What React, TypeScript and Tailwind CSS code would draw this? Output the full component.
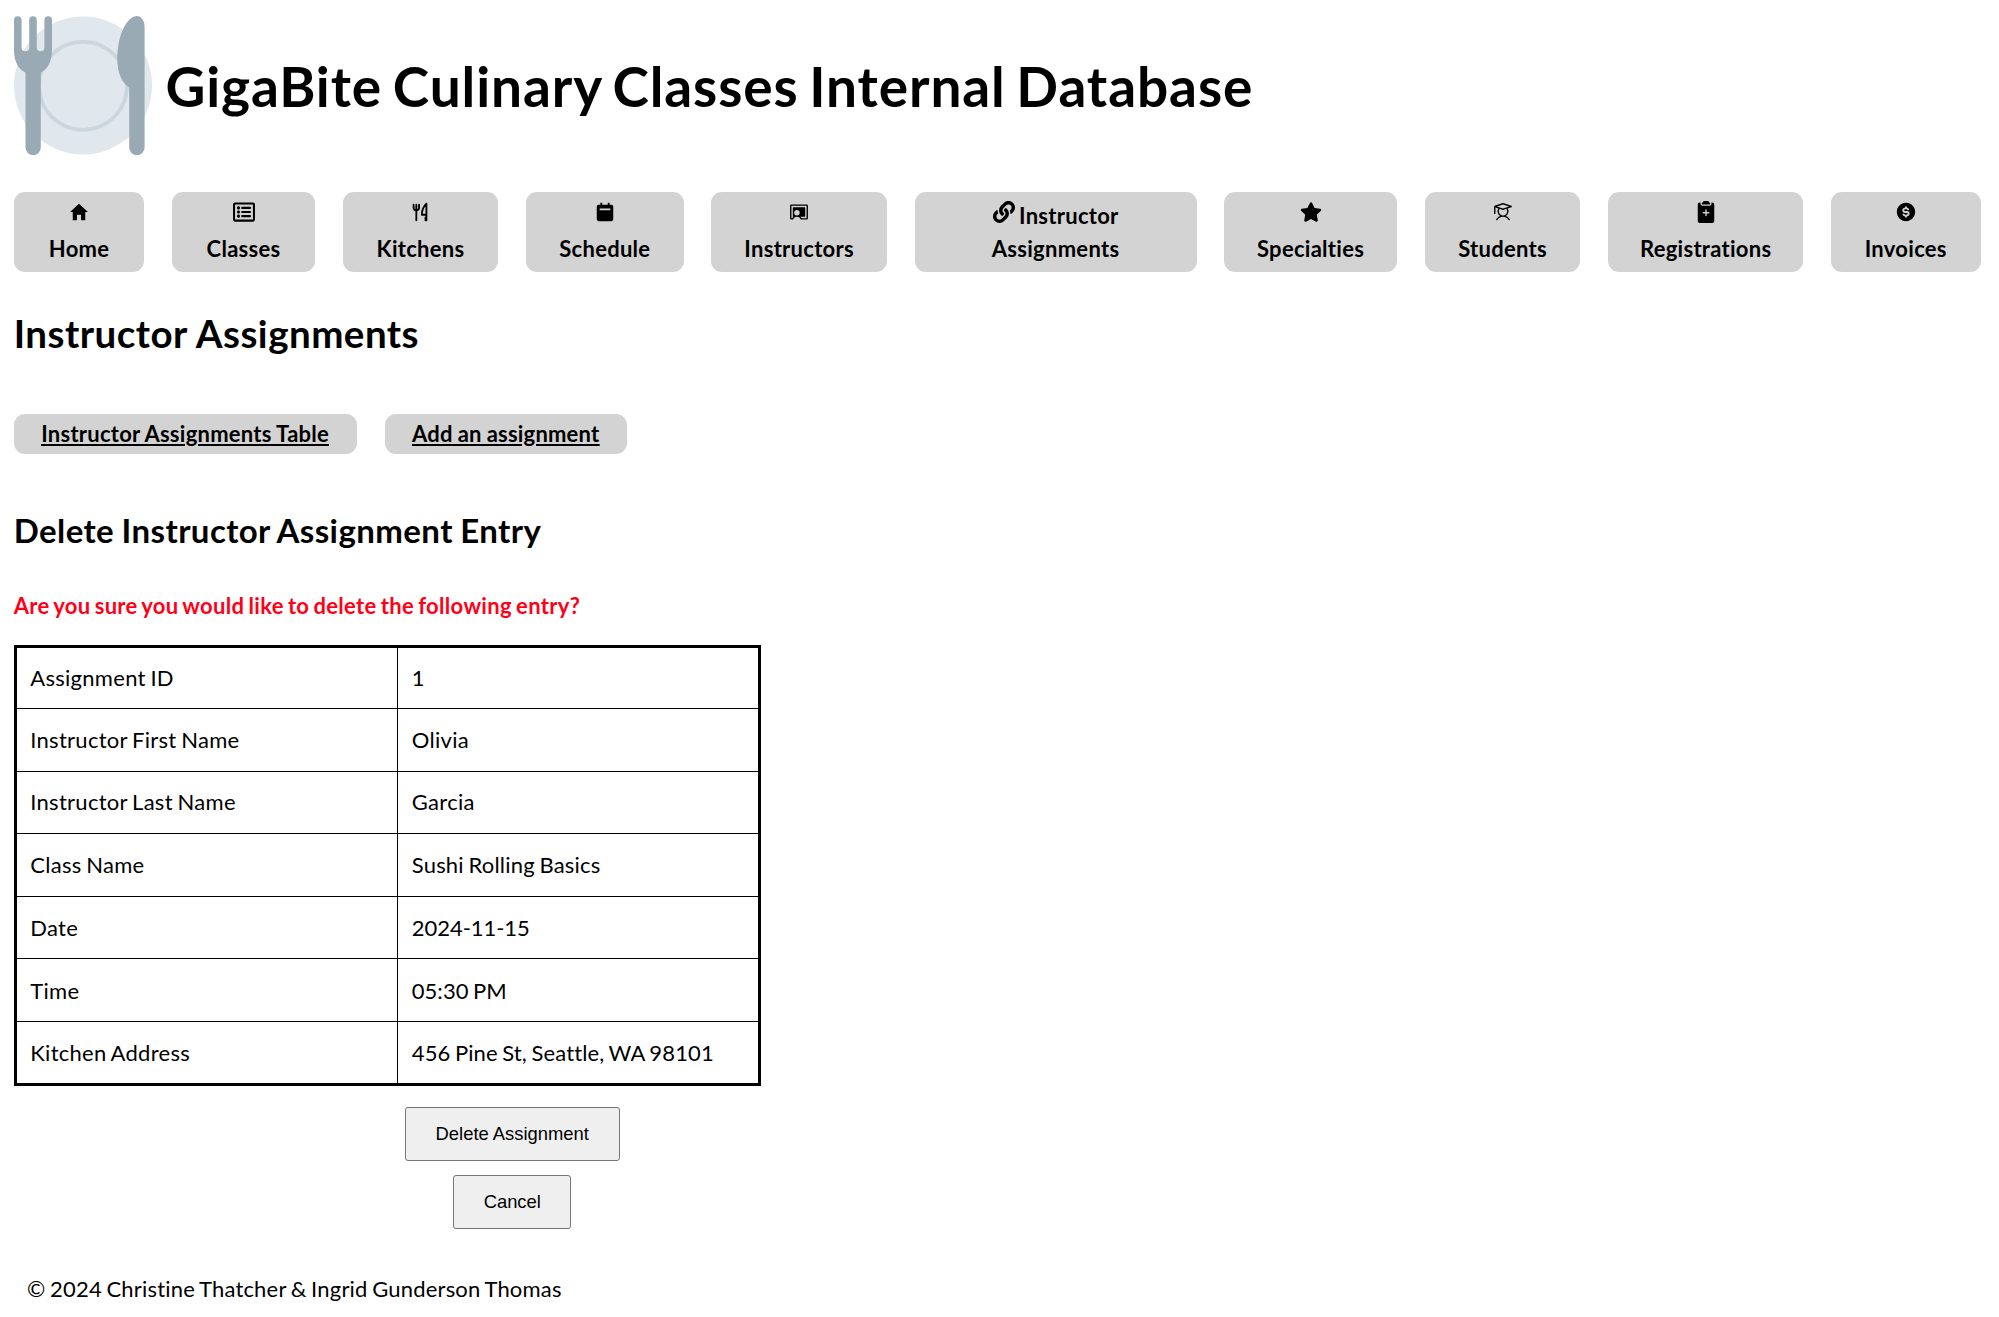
import type { ReactNode } from "react";
import { IoMdHome } from "react-icons/io";
import { FaRegListAlt, FaLink, FaStar } from "react-icons/fa";
import { PiStudent, PiChalkboardTeacherFill } from "react-icons/pi";
import { BiSolidDollarCircle } from "react-icons/bi";
import { BsFillClipboard2PlusFill } from "react-icons/bs";
import { TbToolsKitchen2 } from "react-icons/tb";

function Logo() {
  return (
    <svg viewBox="14 16 138 139" className="h-[139px] w-[138px] shrink-0">
      <circle cx="83" cy="85.5" r="69" fill="#e1e8ed" />
      <circle cx="83" cy="85.8" r="44" fill="none" stroke="#ccd6dd" strokeWidth="3.8" />
      <path
        fill="#99aab5"
        d="M14 20a3.8 3.8 0 0 1 7.6 0V47.5a3.8 3.8 0 0 0 7.6 0V20a3.8 3.8 0 0 1 7.6 0V47.5a3.8 3.8 0 0 0 7.6 0V20a3.8 3.8 0 0 1 7.6 0V50C52 62 47 70 40.8 72.5V147.5a7.65 7.65 0 0 1-15.3 0V72.5C19 70 14 62 14 50Z"
      />
      <path fill="#99aab5" d="M137 16C141 16 144.6 20 144.6 27V147.5a7.7 7.7 0 0 1-15.4 0V87.5C122 83 117.3 73 117.3 59C117.3 33 128 16 137 16Z" />
    </svg>
  );
}

function CalendarIcon() {
  return (
    <svg viewBox="0 0 24 24" width="1em" height="1em" fill="currentColor">
      <path fillRule="evenodd" d="M7 2h2v2h6V2h2v2h2a2 2 0 0 1 2 2v14a2 2 0 0 1-2 2H5a2 2 0 0 1-2-2V6a2 2 0 0 1 2-2h2zM6.2 8.2v2h11.6v-2z" />
    </svg>
  );
}

type NavItem = { label: string; icon: ReactNode; width: string; inline?: boolean };

const navItems: NavItem[] = [
  { label: "Home", icon: <IoMdHome />, width: "w-[130.6px]" },
  { label: "Classes", icon: <FaRegListAlt />, width: "w-[142.8px]" },
  { label: "Kitchens", icon: <TbToolsKitchen2 />, width: "w-[155.5px]" },
  { label: "Schedule", icon: <CalendarIcon />, width: "w-[157.6px]" },
  { label: "Instructors", icon: <PiChalkboardTeacherFill />, width: "w-[175.4px]" },
  { label: "Assignments", icon: <FaLink />, width: "w-[281.9px]", inline: true },
  { label: "Specialties", icon: <FaStar />, width: "w-[172.6px]" },
  { label: "Students", icon: <PiStudent />, width: "w-[155.8px]" },
  { label: "Registrations", icon: <BsFillClipboard2PlusFill />, width: "w-[194.8px]" },
  { label: "Invoices", icon: <BiSolidDollarCircle />, width: "w-[149.8px]" },
];

const rows = [
  { name: "Assignment ID", value: "1", spacing: "" },
  { name: "Instructor First Name", value: "Olivia", spacing: "tracking-[0.3px]" },
  { name: "Instructor Last Name", value: "Garcia", spacing: "pb-px tracking-[0.3px]" },
  { name: "Class Name", value: "Sushi Rolling Basics", spacing: "pb-[2px] tracking-[0.2px]" },
  { name: "Date", value: "2024-11-15", spacing: "tracking-[-0.04px]" },
  { name: "Time", value: "05:30 PM", spacing: "tracking-[0.04px]" },
  { name: "Kitchen Address", value: "456 Pine St, Seattle, WA 98101", spacing: "tracking-[0.12px]" },
];

export default function App() {
  return (
    <div className="flex h-[1317px] w-[1999px] flex-col overflow-hidden bg-white font-['Lato',sans-serif] text-[22px] leading-[33px] text-black">
      <header className="flex h-[192px] items-start pt-4 pl-[13.75px]">
        <Logo />
        <h1 className="mt-[37px] ml-[13.75px] text-[55px] leading-[66px] font-bold tracking-[0.9px] [word-spacing:-3.6px]">
          GigaBite Culinary Classes Internal Database
        </h1>
      </header>

      <nav className="flex gap-[27.8px] pl-[13.75px] font-bold tracking-[0.28px]">
        {navItems.map((item) => (
          <a key={item.label} className={`flex h-20 shrink-0 flex-col items-center rounded-[11px] bg-[#d3d3d3] pt-[7px] ${item.width}`}>
            <span className="flex h-[33px] items-start gap-[4.5px]">
              <span className="mt-[1.5px]">{item.icon}</span>
              {item.inline && <span>Instructor</span>}
            </span>
            <span>{item.label}</span>
          </a>
        ))}
      </nav>

      <main className="pl-[13.75px]">
        <h2 className="mt-[38px] text-[38.5px] leading-[47px] font-bold tracking-[0.48px] [word-spacing:0.2px]">Instructor Assignments</h2>
        <div className="mt-[56.5px] flex gap-[28px] font-bold underline [word-spacing:-0.5px]">
          <a className="rounded-[11px] bg-[#d3d3d3] px-[27.5px] py-[3.5px] tracking-[0.25px]">Instructor Assignments Table</a>
          <a className="rounded-[11px] bg-[#d3d3d3] px-[27.5px] py-[3.5px] tracking-[0.2px]">Add an assignment</a>
        </div>
        <h3 className="mt-[56px] text-[33px] leading-[40px] font-bold tracking-[0.41px] [word-spacing:-1px]">Delete Instructor Assignment Entry</h3>
        <p className="mt-[39px] font-bold tracking-[0.32px] text-[#ff0018] [word-spacing:-1.5px]">
          Are you sure you would like to delete the following entry?
        </p>

        <table className="mt-[23px] w-[747px] table-fixed border-collapse border-[3px] border-black [word-spacing:-1.2px]">
          <tbody>
            {rows.map((row) => (
              <tr key={row.name} className="h-[62.6px]">
                <td className={`w-[382px] border border-black pl-[13.5px] ${row.spacing} tracking-[0.28px]`}>{row.name}</td>
                <td className={`border border-black pl-[14px] ${row.spacing}`}>{row.value}</td>
              </tr>
            ))}
          </tbody>
        </table>

        <div className="mt-[21px] flex w-[997px] flex-col items-center gap-[14px] font-['Liberation_Sans',sans-serif] text-[18.4px]">
          <button className="h-[54px] w-[215px] rounded-[3px] border border-[#767676] bg-[#efefef]">Delete Assignment</button>
          <button className="h-[54px] w-[118px] rounded-[3px] border border-[#767676] bg-[#efefef]">Cancel</button>
        </div>
      </main>

      <footer className="mt-[43px] pl-[27px] tracking-[0.2px] [word-spacing:-1.3px]">© 2024 Christine Thatcher &amp; Ingrid Gunderson Thomas</footer>
    </div>
  );
}
